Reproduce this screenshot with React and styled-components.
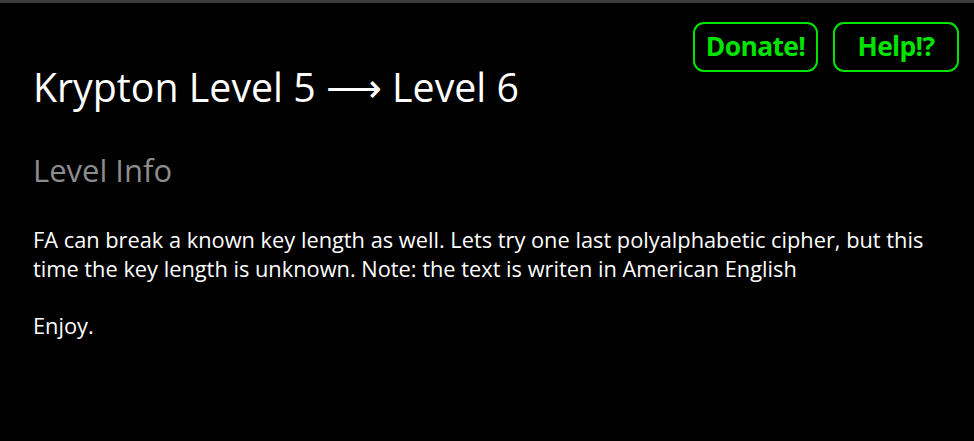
import React from "react";
import styled, { createGlobalStyle } from "styled-components";

const Global = createGlobalStyle`
  html, body { margin: 0; padding: 0; background: #000; }
  body { font-family: "Open Sans", "Noto Sans", sans-serif; }
`;

const Page = styled.div`
  width: 974px;
  height: 441px;
  background: #000;
  border-top: 3px solid #3b3b3b;
  box-sizing: border-box;
  padding: 0 15px 0 33px;
  color: #fff;
  overflow: hidden;
`;

const TopBar = styled.nav`
  float: right;
  display: flex;
  gap: 15px;
  margin-top: 19px;
`;

const PillButton = styled.a`
  display: flex;
  align-items: center;
  justify-content: center;
  width: ${(p) => p.$w}px;
  height: 50px;
  box-sizing: border-box;
  border: 2px solid #00e400;
  border-radius: 11px;
  color: #00e400;
  font-weight: 700;
  font-size: 26.5px;
  letter-spacing: -0.7px;
  text-decoration: none;
  padding-bottom: 2px;
`;

const Title = styled.h1`
  margin: 0;
  padding-top: 60px;
  font-weight: 400;
  font-size: 39.3px;
  line-height: 48px;
  color: #fff;
`;

const SubTitle = styled.h2`
  margin: 39px 0 0;
  font-weight: 400;
  font-size: 31px;
  line-height: 40px;
  color: #8c8c8c;
`;

const Para = styled.p`
  max-width: 900px;
  margin: ${(p) => p.$mt}px 0 0;
  font-size: 21.8px;
  line-height: 28.5px;
  color: #fff;
`;

export default function App() {
  return (
    <>
      <Global />
      <Page>
        <TopBar>
          <PillButton $w={125}>Donate!</PillButton>
          <PillButton $w={126}>Help!?</PillButton>
        </TopBar>
        <Title>Krypton Level 5 ⟶ Level 6</Title>
        <SubTitle>Level Info</SubTitle>
        <Para $mt={36}>
          FA can break a known key length as well. Lets try one last polyalphabetic cipher, but this
          time the key length is unknown. Note: the text is writen in American English
        </Para>
        <Para $mt={29}>Enjoy.</Para>
      </Page>
    </>
  );
}
